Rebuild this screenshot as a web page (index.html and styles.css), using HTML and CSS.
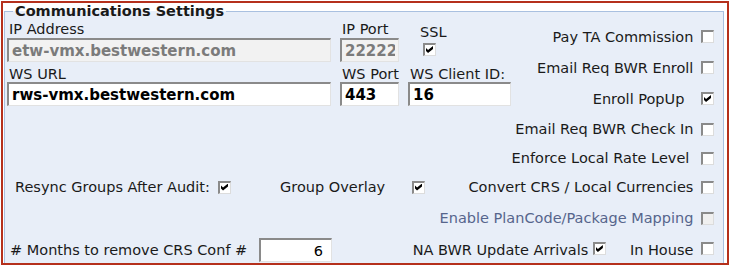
FILE: index.html
```html
<!DOCTYPE html>
<html>
<head>
	<meta charset="utf-8">
	<title>Communications Settings</title>
	<link rel="stylesheet" href="styles.css">
</head>
<body>
	<div class="panel">
		<fieldset class="settings">
			<legend>Communications Settings</legend>
			<div class="layout">
				<div class="fields">
					<label class="lbl">IP Address</label>
					<label class="lbl">IP Port</label>
					<div class="ssl">
						<label class="lbl">SSL</label>
						<input type="checkbox" class="cb" checked>
					</div>
					<input type="text" class="txt" value="etw-vmx.bestwestern.com" disabled>
					<input type="text" class="txt" value="22222" disabled>
					<label class="lbl lbl-2">WS URL</label>
					<label class="lbl lbl-2">WS Port</label>
					<label class="lbl lbl-2">WS Client ID:</label>
					<input type="text" class="txt" value="rws-vmx.bestwestern.com">
					<input type="text" class="txt" value="443">
					<input type="text" class="txt" value="16">
				</div>

				<div class="opt r1">Pay TA Commission <input type="checkbox" class="cb"></div>
				<div class="opt r2">Email Req BWR Enroll <input type="checkbox" class="cb"></div>
				<div class="opt r3 gap-lg">Enroll PopUp <input type="checkbox" class="cb" checked></div>
				<div class="opt r4">Email Req BWR Check In <input type="checkbox" class="cb"></div>
				<div class="opt r5 gap-md">Enforce Local Rate Level <input type="checkbox" class="cb"></div>

				<div class="resync">
					<span class="cell-a">Resync Groups After Audit:</span>
					<span><input type="checkbox" class="cb" checked></span>
					<span>Group Overlay</span>
					<span><input type="checkbox" class="cb" checked></span>
				</div>
				<div class="opt r6">Convert CRS / Local Currencies <input type="checkbox" class="cb"></div>

				<div class="opt r7 disabled">Enable PlanCode/Package Mapping <input type="checkbox" class="cb" disabled></div>

				<div class="months">
					<span class="cell-m"># Months to remove CRS Conf #</span>
					<input type="text" class="txt num" value="6">
				</div>
				<div class="opt r8">
					<span class="gap-sm">NA BWR Update Arrivals <input type="checkbox" class="cb" checked></span>
					<span class="in-house">In House <input type="checkbox" class="cb"></span>
				</div>
			</div>
		</fieldset>
	</div>
</body>
</html>
```

FILE: styles.css
```css
* {
	box-sizing: border-box;
}

body {
	margin: 0;
	font-family: "DejaVu Sans", Verdana, sans-serif;
	font-size: 14.5px;
	color: #1a1a1a;
	background: #fff;
}

.panel {
	margin: 1px 0 0 1px;
	width: 728px;
	height: 264px;
	border: 2px solid #b5301c;
	padding: 0 3px 0 1px;
	overflow: hidden;
}

.settings {
	margin: 0;
	padding: 2px 9px 0 2px;
	border: 1px solid #a9c0e0;
	background: #e8eef8;
	height: 320px;
	min-width: 0;
}

.settings legend {
	margin-left: 6px;
	padding: 0 2px;
	font-size: 14.5px;
	font-weight: bold;
	line-height: 16px;
}

.layout {
	display: grid;
	grid-template-columns: minmax(0, 1fr) auto;
	grid-template-rows: 31px 31px 31px 30px 28px 30px 32px 32px;
}

/* top block with the url / port inputs */
.fields {
	grid-column: 1 / -1;
	grid-row: 1 / span 3;
	align-self: start;
	justify-self: start;
	display: grid;
	grid-template-columns: 324px 59px 103px;
	column-gap: 9px;
	grid-template-rows: 16px 25px 20px 24px;
}

.lbl {
	line-height: 16px;
	padding-left: 2px;
	white-space: nowrap;
}

.lbl-2 {
	align-self: end;
}

.ssl {
	grid-column: 3;
	grid-row: 1 / span 2;
	padding: 3px 0 0 10px;
	display: flex;
	flex-direction: column;
	align-items: flex-start;
}

.ssl .cb {
	margin: 3px 0 0 5px;
}

.txt {
	height: 24px;
	margin: 0;
	padding: 0 3px;
	font-family: "DejaVu Sans", Verdana, sans-serif;
	font-size: 15px;
	font-weight: bold;
	color: #000;
	background: #fff;
	border-style: solid;
	border-width: 2px 1px 1px 2px;
	border-color: #8a8a8a #e2e2e2 #e2e2e2 #8a8a8a;
	outline: none;
	width: 100%;
}

.fields > .txt:nth-of-type(1),
.fields > .txt:nth-of-type(2) {
	margin-top: 1px;
}

.txt:disabled {
	background: #f2f2f2;
	color: #7b7b7b;
}

.num {
	width: 73px;
	text-align: right;
	font-size: 14.5px;
	font-weight: normal;
	padding-right: 8px;
}

/* right column options */
.opt {
	grid-column: 2;
	display: flex;
	align-items: center;
	justify-content: flex-end;
	white-space: pre;
}

.opt > .cb,
.opt span > .cb {
	margin-left: 3px;
}

.r1 { grid-row: 1; }
.r2 { grid-row: 2; }
.r3 { grid-row: 3; }
.r4 { grid-row: 4; }
.r5 { grid-row: 5; }
.r6 { grid-row: 6; }
.r7 { grid-row: 7; }
.r8 { grid-row: 8; }

.gap-lg > .cb {
	margin-left: 12px;
}

.gap-md > .cb {
	margin-left: 7px;
}

.opt .gap-sm > .cb {
	margin-left: 0;
}

.in-house {
	margin-left: 24px;
}

.disabled {
	color: #56658c;
}

.resync {
	grid-column: 1 / -1;
	grid-row: 6;
	justify-self: start;
	display: grid;
	grid-template-columns: 211px 62px 132px 13px;
	align-items: center;
	white-space: nowrap;
}

.resync span {
	display: flex;
	align-items: center;
}

.cell-a {
	padding-left: 8px;
}

.months {
	grid-column: 1 / -1;
	grid-row: 8;
	justify-self: start;
	display: grid;
	grid-template-columns: 252px 73px;
	align-items: center;
	white-space: nowrap;
}

.cell-m {
	padding-left: 3px;
}

/* old style check boxes */
.cb {
	appearance: none;
	-webkit-appearance: none;
	width: 13px;
	height: 13px;
	margin: 0;
	position: relative;
	background: #fff;
	border-style: solid;
	border-width: 2px 1px 1px 2px;
	border-color: #8a8a8a #dcdcdc #dcdcdc #8a8a8a;
	flex: none;
}

.cb:checked::after {
	content: "";
	position: absolute;
	left: 1px;
	top: 1px;
	width: 7px;
	height: 7px;
	background: #000;
	clip-path: polygon(0 29%, 29% 57%, 100% 0, 100% 43%, 29% 100%, 0 71%);
}

.cb:disabled {
	background: #f0f0f0;
}
```
